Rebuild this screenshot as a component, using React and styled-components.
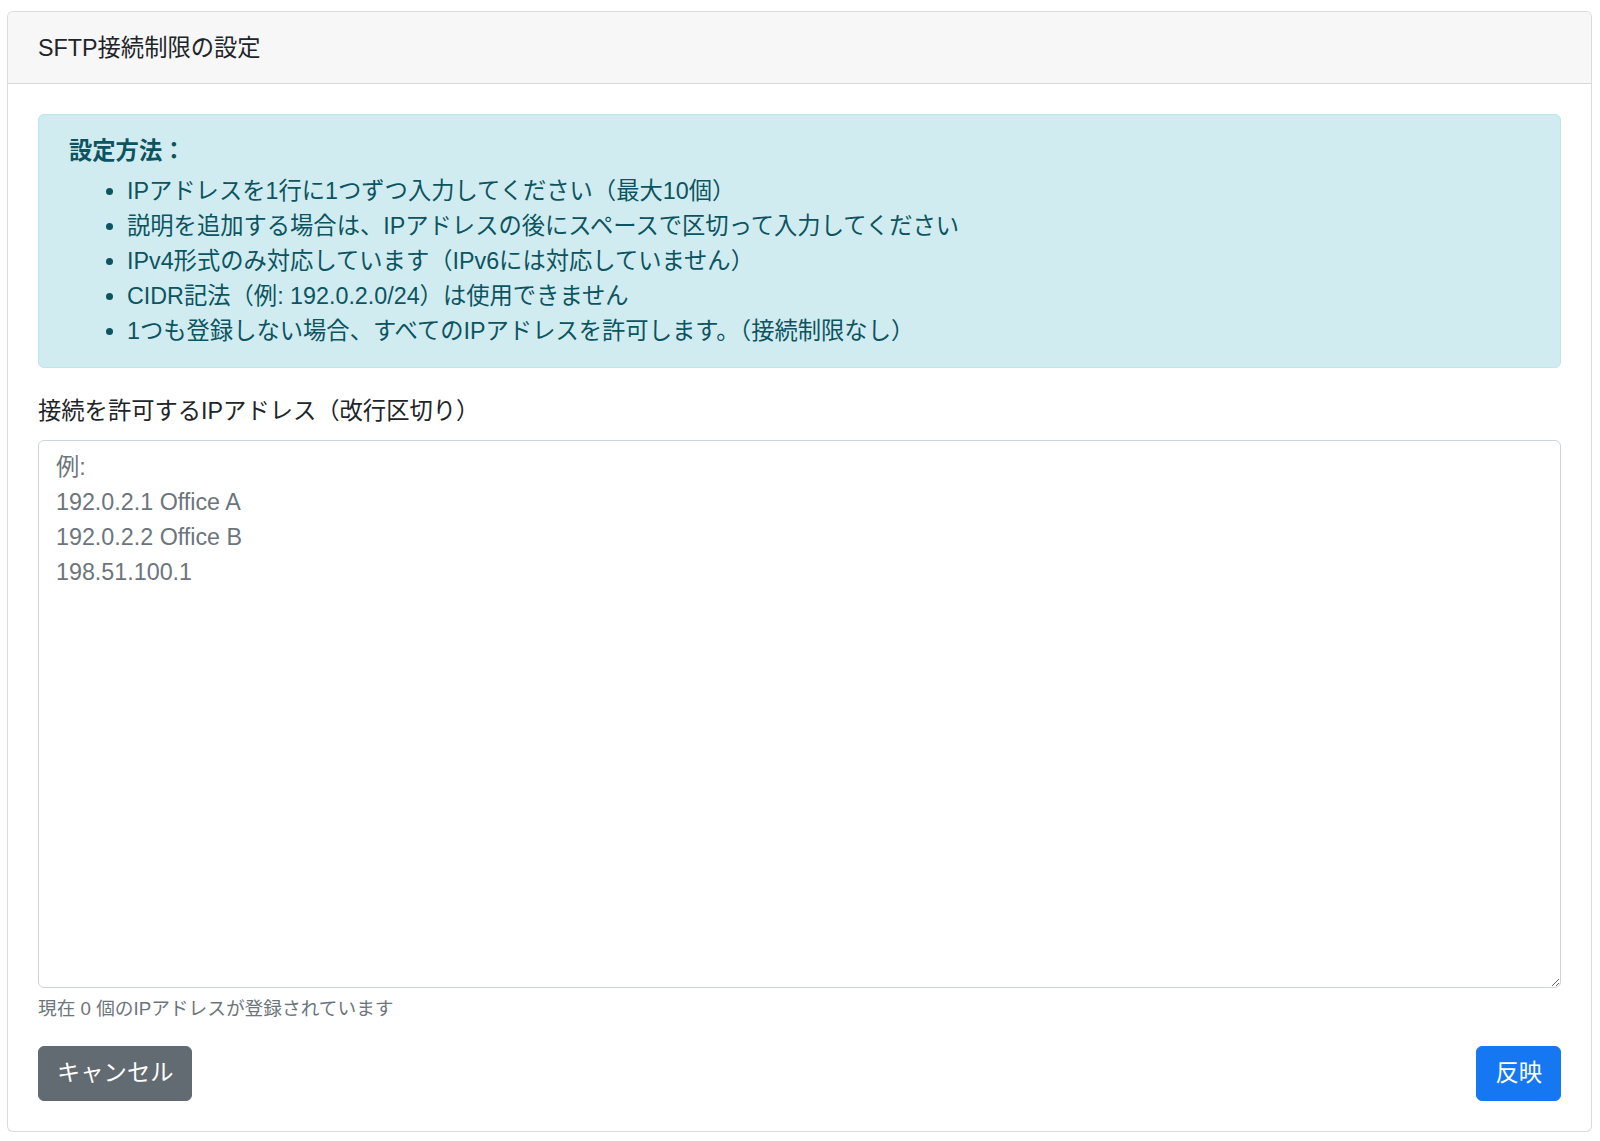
import React from "react";
import styled, { createGlobalStyle } from "styled-components";

const GlobalStyle = createGlobalStyle`
  html, body {
    margin: 0;
    padding: 0;
    background: #ffffff;
  }
  body {
    font-family: "Liberation Sans", "Noto Sans CJK JP", sans-serif;
    font-size: 23.3px;
    line-height: 35px;
    color: #212529;
  }
  * { box-sizing: border-box; }
`;

const Page = styled.div`
  padding: 11px 8px 9px 7px;
`;

const Card = styled.section`
  display: flex;
  flex-direction: column;
  background: #fff;
  border: 1px solid rgba(0, 0, 0, 0.14);
  border-radius: 6px;
  overflow: hidden;
`;

const CardHeader = styled.header`
  background: #f7f7f7;
  border-bottom: 1px solid rgba(0, 0, 0, 0.13);
  padding: 18px 30px 17px;
  font-size: 23.3px;
  line-height: 36px;
  color: #212529;
`;

const CardBody = styled.div`
  padding: 30px;
`;

const Alert = styled.div`
  background: #d1ecf1;
  border: 1px solid #bee5eb;
  border-radius: 6px;
  color: #0c5460;
  padding: 18px 30px;
  margin-bottom: 24.5px;
`;

const AlertHeading = styled.div`
  font-weight: 700;
  line-height: 36px;
  margin-bottom: 5px;
`;

const List = styled.ul`
  margin: 0;
  padding-left: 58px;
  line-height: 35px;
`;

const FormGroup = styled.div`
  margin-bottom: 23px;
`;

const Label = styled.label`
  display: block;
  line-height: 36px;
  margin-bottom: 11px;
`;

const TextArea = styled.textarea`
  display: block;
  width: 100%;
  height: 548px;
  padding: 9px 17px;
  font-family: inherit;
  font-size: 23.3px;
  line-height: 35px;
  color: #495057;
  background: #fff;
  border: 1px solid #ced4da;
  border-radius: 6px;
  resize: vertical;
  outline: none;
  &::placeholder {
    color: #6c757d;
    opacity: 1;
  }
`;

const HelpText = styled.small`
  display: block;
  margin-top: 7px;
  font-size: 18.7px;
  line-height: 28.8px;
  color: #6c757d;
`;

const Actions = styled.div`
  display: flex;
  justify-content: space-between;
  align-items: center;
`;

const Button = styled.button`
  font-family: inherit;
  font-size: 23.3px;
  line-height: 35px;
  padding: 9px 18px;
  border-radius: 6px;
  border: 1px solid ${(p) => (p.$variant === "primary" ? "#1577f2" : "#626a72")};
  background: ${(p) => (p.$variant === "primary" ? "#1577f2" : "#626a72")};
  color: #fff;
  cursor: pointer;
`;

const rules = [
  "IPアドレスを1行に1つずつ入力してください（最大10個）",
  "説明を追加する場合は、IPアドレスの後にスペースで区切って入力してください",
  "IPv4形式のみ対応しています（IPv6には対応していません）",
  "CIDR記法（例: 192.0.2.0/24）は使用できません",
  "1つも登録しない場合、すべてのIPアドレスを許可します。（接続制限なし）",
];

export default function App() {
  return (
    <>
      <GlobalStyle />
      <Page>
        <Card>
          <CardHeader>SFTP接続制限の設定</CardHeader>
          <CardBody>
            <Alert>
              <AlertHeading>設定方法：</AlertHeading>
              <List>
                {rules.map((r) => (
                  <li key={r}>{r}</li>
                ))}
              </List>
            </Alert>
            <FormGroup>
              <Label htmlFor="ips">接続を許可するIPアドレス（改行区切り）</Label>
              <TextArea
                id="ips"
                placeholder={"例:\n192.0.2.1 Office A\n192.0.2.2 Office B\n198.51.100.1"}
              />
              <HelpText>現在 0 個のIPアドレスが登録されています</HelpText>
            </FormGroup>
            <Actions>
              <Button type="button">キャンセル</Button>
              <Button type="button" $variant="primary">
                反映
              </Button>
            </Actions>
          </CardBody>
        </Card>
      </Page>
    </>
  );
}
